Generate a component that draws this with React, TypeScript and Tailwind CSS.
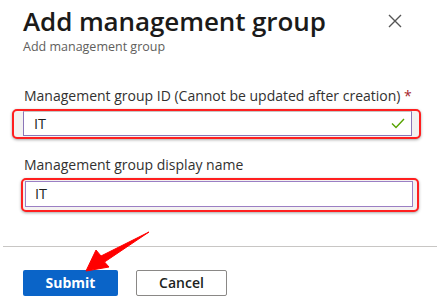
import React from "react";

export default function App() {
  return (
    <div
      className="relative w-[437px] h-[306px] overflow-hidden bg-white text-[#323130]"
      style={{ fontFamily: '"Open Sans", "Noto Sans", sans-serif' }}
    >
      <div className="flex items-start justify-between pl-[23px] pr-[35px] pt-[5px]">
        <div>
          <h1 className="text-[26px] leading-[32px] font-semibold text-[#1b1a19] tracking-[-0.1px]">
            Add management group
          </h1>
          <div className="text-[12.5px] leading-[16px] text-[#605e5c] mt-[2px]">
            Add management group
          </div>
        </div>
        <svg width="14" height="14" viewBox="0 0 14 14" className="mt-[9px]">
          <path d="M1 1 L13 13 M13 1 L1 13" stroke="#555" strokeWidth="1.4" />
        </svg>
      </div>

      <div className="mt-[31px] pl-[24px] text-[14px] leading-[20px] text-[#323130]">
        Management group ID (Cannot be updated after creation){" "}
        <span className="text-[#a4262c]">*</span>
      </div>
      <div className="ml-[12px] mt-[3px] w-[409px] h-[30px] rounded-[5px] border-2 border-[#ff1f1f] bg-[#f3f2f1] shadow-[0_1px_3px_rgba(0,0,0,0.35)]">
        <div className="ml-[9px] w-[389px] h-[25px] border border-[#8a75b8] border-t-[#c8c6c4] bg-white flex items-center justify-between pl-[10px] pr-[6px] text-[14.5px] text-[#201f1e]">
          <span>IT</span>
          <svg width="14" height="11" viewBox="0 0 14 11">
            <path d="M1 5.5 L5 9.5 L13 1" fill="none" stroke="#57a300" strokeWidth="1.4" />
          </svg>
        </div>
      </div>

      <div className="mt-[16px] pl-[24px] text-[14px] leading-[20px] text-[#323130]">
        Management group display name
      </div>
      <div className="ml-[21px] mt-[3px] w-[398px] h-[34px] rounded-[5px] border-2 border-[#ff1f1f] bg-[#f3f2f1] shadow-[0_1px_3px_rgba(0,0,0,0.35)] pt-[1px]">
        <div className="ml-[2px] w-[388px] h-[26px] border border-[#9b7fc4] bg-white flex items-center pl-[9px] text-[14.5px] text-[#201f1e]">
          IT
        </div>
      </div>

      <div className="mt-[34px] ml-[3px] h-[1px] bg-[#c8c6c4]" />

      <div className="flex gap-[18px] pl-[23px] mt-[23px]">
        <button className="w-[95px] h-[26px] rounded-[2px] bg-[#0a64c8] text-white text-[14px] font-bold leading-none">
          Submit
        </button>
        <button className="w-[91px] h-[26px] rounded-[2px] border border-[#8a8886] bg-white text-[#201f1e] text-[14px] font-semibold leading-none">
          Cancel
        </button>
      </div>

      <svg
        className="absolute left-0 top-0 pointer-events-none"
        width="437"
        height="306"
        viewBox="0 0 437 306"
      >
        <polygon
          points="86,271 96,250 101,256 149,232 104.5,262 109,267"
          fill="#ff0000"
          stroke="#ff0000"
          strokeWidth="1"
          strokeLinejoin="round"
        />
      </svg>
    </div>
  );
}
